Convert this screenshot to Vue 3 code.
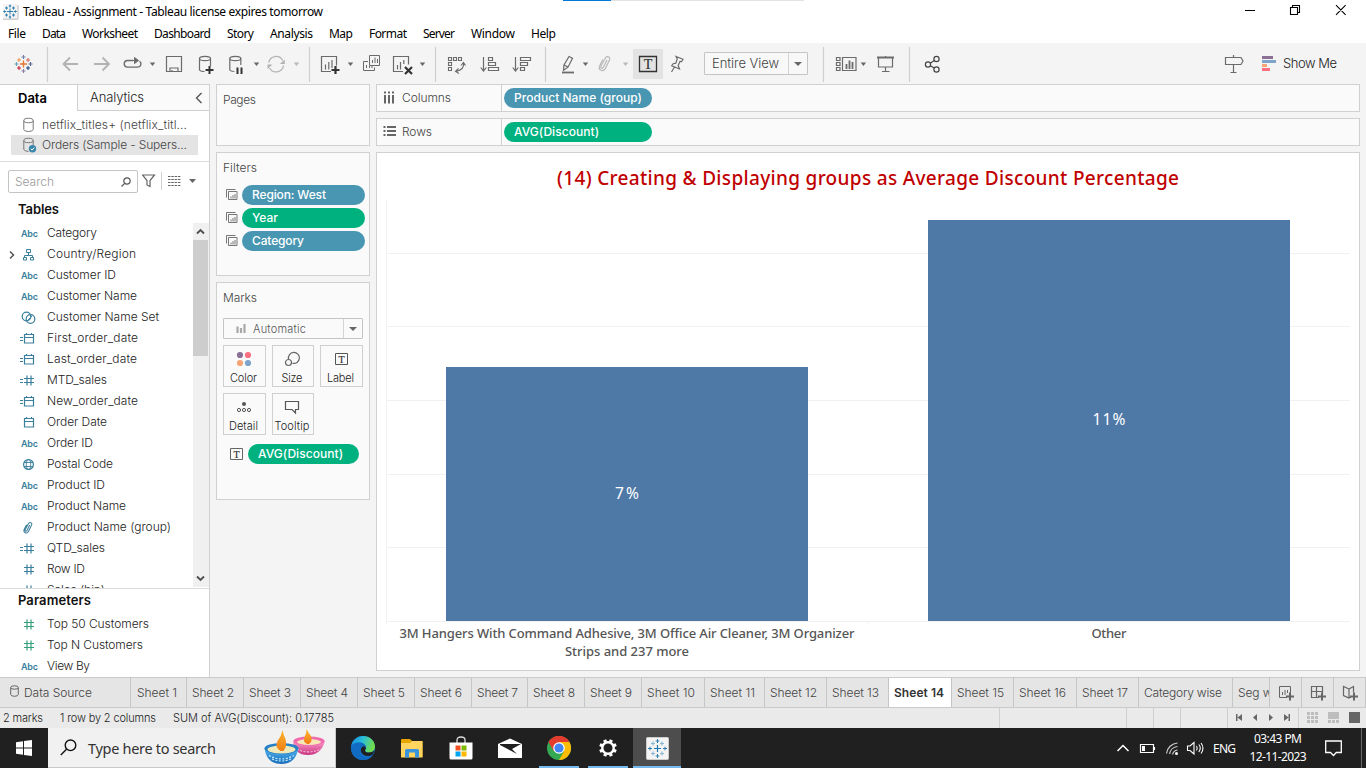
<script setup>
// Tracks text out (or in) so that a label takes a given width in pixels.
const vFit = {
  mounted(el, { value }) {
    if (!value) return
    const n = el.textContent.trim().length
    const w = el.getBoundingClientRect().width
    const gap = (value - w) / Math.max(1, n - 1)
    el.style.letterSpacing = gap.toFixed(3) + 'px'
    el.style.marginRight = (-gap).toFixed(3) + 'px'
  },
}

const menus = [
  ['File', 18], ['Data', 24], ['Worksheet', 56], ['Dashboard', 57], ['Story', 27], ['Analysis', 43],
  ['Map', 24], ['Format', 38], ['Server', 32], ['Window', 44], ['Help', 25],
]
const fields = [
  ['abc', 'Category', 50], ['geo', 'Country/Region', 89], ['abc', 'Customer ID', 69],
  ['abc', 'Customer Name', 90], ['set', 'Customer Name Set', 112], ['cdate', 'First_order_date', 91],
  ['cdate', 'Last_order_date', 90], ['cnum', 'MTD_sales', 60], ['cdate', 'New_order_date', 91],
  ['date', 'Order Date', 60], ['abc', 'Order ID', 46], ['globe', 'Postal Code', 66],
  ['abc', 'Product ID', 58], ['abc', 'Product Name', 79], ['clip', 'Product Name (group)', 124],
  ['cnum', 'QTD_sales', 58], ['num', 'Row ID', 38], ['cnum', 'Sales (bin)', 58],
]
const params = [['num', 'Top 50 Customers', 102], ['num', 'Top N Customers', 96], ['abc', 'View By', 43]]
const filters = [['Region: West', 74, 'blue'], ['Year', 26, 'green'], ['Category', 52, 'blue']]
const sheets = [
  ['Sheet 1', 56, 40], ['Sheet 2', 57, 42], ['Sheet 3', 57, 42], ['Sheet 4', 57, 42], ['Sheet 5', 57, 42],
  ['Sheet 6', 57, 42], ['Sheet 7', 56, 41], ['Sheet 8', 57, 42], ['Sheet 9', 57, 42], ['Sheet 10', 63, 48],
  ['Sheet 11', 60, 45], ['Sheet 12', 62, 47], ['Sheet 13', 62, 47], ['Sheet 14', 63, 50], ['Sheet 15', 62, 47],
  ['Sheet 16', 63, 47], ['Sheet 17', 62, 46], ['Category wise', 94, 78], ['Seg wise', 37, 50],
]
const bars = [{ h: 254, label: '7%', w: 24 }, { h: 401, label: '11%', w: 33 }]
const gridYs = [53, 126, 200, 274, 347]
const pluses = [
  [0, -7, '#6f7fa8'], [0, 7, '#8a7ba5'], [-7, 0, '#6b9fb5'], [7, 0, '#5b6591'],
  [-4.5, -4, '#eb9a4c'], [4.5, -4, '#d06a5a'], [-4.5, 4, '#c72035'], [4.5, 4, '#1f457e'],
]
</script>

<template>
  <div class="app">
    <header class="titlebar">
      <svg class="appicon" viewBox="0 0 16 16" width="16" height="16">
        <rect width="14.5" height="15" fill="#f3f3f3" /><path d="M0 15.2h15V1" stroke="#bbb" fill="none" />
        <path d="M7 4.5v6M4 7.5h6M7 .5v3M5.8 2h2.4M7 11.5v3M5.8 13h2.4M.2 7.5h3M1.5 6.3v2.4M10.8 7.5h3M12.4 6.3v2.4M2 4h3M3.5 2.6v3M9 4h3M10.5 2.6v3M2 11h3M3.5 9.6v3M9 11h3M10.5 9.6v3" stroke="#2f7fb0" fill="none" />
      </svg>
      <span v-fit="300">Tableau - Assignment - Tableau license expires tomorrow</span>
      <i class="progress"></i>
      <svg class="wincontrols" viewBox="1236 0 130 24" width="130" height="24" fill="none" stroke="#000">
        <path d="M1245 10.5h10M1290.5 7.500h7v7h-7zM1292.500 7.500v-2h7v7h-2M1336 5.200l9.600 9.600M1345.600 5.200l-9.600 9.600" stroke-width="1.100" />
      </svg>
    </header>

    <nav class="menubar"><div v-for="m in menus" :key="m[0]" class="menu"><span v-fit="m[1]">{{ m[0] }}</span></div></nav>

    <div class="toolbar">
      <svg viewBox="0 43 704 41" width="704" height="41" fill="none" stroke="#6b6b6b" stroke-width="1.200">
        <path d="M47.500 47v35M309.500 47v35M435.500 47v35M545.500 47v35" stroke="#cfcfcf" />
        <path d="M23.500 60.500v7M20 64h7" stroke="#e8762c" stroke-width="1.300" />
        <path v-for="(p, i) in pluses" :key="i" :d="`M${23.5 + p[0] - 2} ${64 + p[1]}h4m-2 -2v4`" :stroke="p[2]" stroke-width="1.100" />
        <g stroke="#b3b3b3" stroke-width="1.800">
          <path d="M78 64H64M70 57.500L63.500 64l6.500 6.500M94 64h14.500M102.500 57.500L109 64l-6.500 6.500" />
          <path d="M268.700 62.500a7.500 7.500 0 0 1 14-2M283.500 65.500a7.500 7.500 0 0 1 -14 2.500" stroke-width="1.300" />
          <path d="M284.800 59.500v4.500h-5zM267.500 69v-4.500h5z" fill="#b3b3b3" stroke="none" />
        </g>
        <path d="M133 60.500h-6a3.400 3.400 0 0 0 0 6.700h10.500a3.300 3.300 0 0 0 2-6" stroke-width="1.300" />
        <path d="M132 60.500h5M134.500 57.500l4 3-4 3z" fill="#6b6b6b" stroke-width="1" />
        <path d="M166.500 56.500h15v15h-15zM170 71v-3h8v3M172 70v1.500" />
        <path d="M210.500 66v-7.500M199.500 58.500v11.500q1 1.500 5 1.500M229.800 58.500v11.500q1 1.500 4.500 1.500M240.800 65v-6.500" />
        <ellipse cx="205" cy="58.500" rx="5.500" ry="2.200" /><ellipse cx="235.300" cy="58.500" rx="5.500" ry="2.200" />
        <path d="M209.500 66v8M205.500 70h8" stroke="#333" stroke-width="2" />
        <path d="M237.500 67.500v6.500M241.500 67.500v6.500" stroke="#333" stroke-width="2" />
        <path d="M331 71.500h-9.500v-15h15v9M325.500 64.500v5M328.800 62v7.500M332 60v8" />
        <path d="M335.500 66v8M331.500 70h8" stroke="#333" stroke-width="2.200" />
        <path d="M369.500 55.500h10v10h-10zM372.500 63v-3M375 63v-5.500M377.500 63v-4M368 61.500h-4.500v9h11v-3M366.500 68v-3M369.500 68v-2M372 68v-2" stroke-width="1" />
        <path d="M403 71.500h-9.500v-15h15v8M397.500 65v4.500M400.500 62v7.500M403.800 60v4" />
        <path d="M405 67l7 7M412 67l-7 7" stroke="#333" stroke-width="2.200" />
        <path d="M448.500 57.500h3v3h-3zM453.500 57.500h3v3h-3zM458.500 57.500h3v3h-3zM448.500 62.500h3v3h-3zM448.500 67.500h3v3h-3zM463.500 63.500q1 6-7.500 8M461 65.500l2.500-3 2 3M458.500 68.500l-3 3 3.500 2" stroke-width="1.100" />
        <path d="M483.500 57v13M480.700 67.500l2.800 3.500 2.800-3.500M488.500 57.500h4v3h-4zM488.500 62.500h7v3h-7zM488.500 67.500h10v3h-10z" />
        <path d="M515.500 57v13M512.700 67.500l2.800 3.500 2.800-3.500M520.500 57.500h10v3h-10zM520.500 62.500h7v3h-7zM520.500 67.500h4v3h-4z" />
        <path d="M562 72.500h12" stroke-width="1.800" /><path d="M569 56.500l3.500 1.700-4.500 9-4.500 3 .5-5.200zM564 65l4 2" />
        <g transform="translate(598 56)" stroke="#b8b8b8"><path d="M9 4L5.500 11c-1.300 2.500-3.600 1.200-2.400-1.200L7 2.700C8.600-.7 13 .8 11.400 4.200L7.300 12.600C5 16.500-.3 14 1.700 9.700L4.800 3.600" /></g>
        <path d="M633 49h30v30h-30z" fill="#e3e3e3" stroke="none" /><path d="M639.500 56.500h17v15h-17z" stroke="#333" stroke-width="1.300" />
        <path d="M676 56.500l7 2.800-1.500 2.200-1.500-.2-1.800 4.200 1.300 3.500-7.800-3.300 1.500-2 2.600-.5 1.400-4.200zM674.500 67l-3 5" />
        <g fill="#666" stroke="none">
          <path v-for="x in [152.500, 256.500, 350.500, 422.500, 585.500]" :key="x" :d="`M${x - 2.7} 62.500h5.400l-2.700 3.500z`" />
          <path v-for="x in [296.500, 625.500]" :key="x" :d="`M${x - 2.7} 62.500h5.400l-2.700 3.500z`" fill="#b8b8b8" />
        </g>
        <text x="648" y="68.500" class="serif-t" font-size="14">T</text>
      </svg>
      <div class="view-select"><span v-fit="67">Entire View</span><i class="caret-cell"><b></b></i></div>
      <svg class="tools-right" viewBox="808 43 142 41" width="142" height="41" fill="none" stroke="#6b6b6b" stroke-width="1.200">
        <path d="M823.500 47v35M909.500 47v35" stroke="#cfcfcf" />
        <path d="M836.500 57.500h3.500v3h-3.500zM836.500 62.500h3.500v3h-3.500zM836.500 67.500h3.500v3h-3.500zM842.500 57.500h13.500v13h-13.500z" />
        <path d="M846.500 64v5M849.500 60.500v8.500M852.500 62v7" stroke-width="1.800" />
        <path d="M860.700 62.500h5.400l-2.700 3.500z" fill="#666" stroke="none" />
        <path d="M877 57.500h17" stroke-width="2" /><path d="M878.500 58v9h14v-9M885.500 56v1M885.500 67v4.500M882 71.500h7.500" />
        <g stroke="#444"><circle cx="928" cy="64.500" r="2.600" /><circle cx="936.500" cy="59" r="2.600" /><circle cx="936.500" cy="69.500" r="2.600" /><path d="M930.300 63.200l4-2.600M930.300 65.800l4 2.300" /></g>
      </svg>
      <div class="showme">
        <svg viewBox="1224 54 56 20" width="56" height="20" fill="none">
          <path d="M1226.500 57.500h15.500l2 3.500-2 3.500h-15.500zM1234.500 55v2M1234.500 64.500v8M1231.500 72.500h6" stroke="#6b6b6b" stroke-width="1.200" />
          <path d="M1263 57.500h11" stroke="#8a7095" stroke-width="3" /><path d="M1263 61.500h14" stroke="#7fa4cc" stroke-width="3" />
          <path d="M1263 65.500h5" stroke="#f7a576" stroke-width="3" /><path d="M1263 69.500h8" stroke="#fb6f80" stroke-width="3" />
        </svg>
        <span v-fit="54">Show Me</span>
      </div>
    </div>

    <main class="workspace">
      <aside class="sidebar">
        <div class="sidetabs">
          <div class="st active"><span v-fit="29">Data</span></div>
          <div class="st other"><span v-fit="54">Analytics</span>
            <svg viewBox="0 0 8 12" width="8" height="12"><path d="M6.500 1L1.500 6l5 5" fill="none" stroke="#555" stroke-width="1.400" /></svg>
          </div>
        </div>
        <div class="sources">
          <div class="source">
            <svg viewBox="0 0 14 16" width="14" height="16" fill="none" stroke="#777"><ellipse cx="5.500" cy="3.500" rx="4.700" ry="2.200" /><path d="M.8 3.500v9q.5 2 4.700 2t4.700-2v-9" /></svg>
            <span v-fit="145">netflix_titles+ (netflix_titl...</span>
          </div>
          <div class="source selected">
            <svg viewBox="0 0 14 16" width="14" height="16" fill="none" stroke="#777"><ellipse cx="5.500" cy="3.500" rx="4.700" ry="2.200" /><path d="M.8 3.500v9q.5 1.500 4.700 2M10.200 8v-4.500" /><circle cx="9.500" cy="11.800" r="3.700" fill="#3a86ab" stroke="none" /><path d="M7.800 11.800l1.300 1.300 2.200-2.500" stroke="#fff" /></svg>
            <span v-fit="145">Orders (Sample - Supers...</span>
          </div>
        </div>
        <div class="searchrow">
          <div class="search"><span v-fit="39">Search</span>
            <svg viewBox="0 0 10 10" width="10" height="10" fill="none" stroke="#555" stroke-width="1.200"><circle cx="6" cy="4" r="3.200" /><path d="M3.700 6.300L.5 9.500" /></svg>
          </div>
          <svg viewBox="142 170 56 23" width="56" height="23" fill="none" stroke="#666">
            <path d="M142.500 175h12l-4.500 5.500v6l-3-1.500v-4.500z" stroke-width="1.200" /><path d="M161.500 172v18" stroke="#d0d0d0" />
            <path d="M168 176.500h12.500M168 179.500h12.500M168 182.500h12.500M168 185.500h12.500" stroke-width="1" stroke-dasharray="2.500 .8" />
            <path d="M189 179h7l-3.500 4z" fill="#666" stroke="none" />
          </svg>
        </div>
        <h3 class="heading"><span v-fit="41">Tables</span></h3>
        <div class="fieldbox">
          <ul class="fields">
            <li v-for="f in fields" :key="f[1]">
              <svg viewBox="0 0 39 21" width="39" height="21" fill="none" stroke="#3a7f9c" stroke-width="1.200">
                <text v-if="f[0] === 'abc'" x="21" y="14" class="abc">Abc</text>
                <template v-if="f[0] === 'geo'"><path d="M10 7.500l3.500 3.500-3.500 3.500" stroke="#555" stroke-width="1.500" /><path d="M26.500 5.500h4v3h-4zM28.500 8.500v3M24.500 14v-2.500h8v2.500M23.500 13.500h3v2.500h-3zM30.500 13.500h3v2.500h-3z" stroke-width="1" /></template>
                <template v-if="f[0] === 'set'"><circle cx="26.500" cy="9.500" r="4.300" /><circle cx="30.500" cy="12" r="4.300" /><path d="M27 14l5-5" stroke-width="1" /></template>
                <path v-if="f[0] === 'cdate' || f[0] === 'date'" d="M24.500 6.500h9v8.500h-9zM24.500 9.500h9M26.500 5v2M31.500 5v2" />
                <path v-if="f[0] === 'cdate' || f[0] === 'cnum'" d="M20 9.500h3M20 12.500h3" />
                <path v-if="f[0] === 'cnum' || f[0] === 'num'" d="M27 5.500v10M31 5.500v10M24 8.500h10M24 12.500h10" />
                <g v-if="f[0] === 'globe'"><circle cx="28.500" cy="10.500" r="4.900" /><ellipse cx="28.500" cy="10.500" rx="2.200" ry="4.900" stroke-width=".9" /><path d="M24 8.500h9M24 12.500h9" stroke-width=".9" /></g>
                <g v-if="f[0] === 'clip'" transform="translate(23 5) scale(.75)" stroke-width="1.400"><path d="M9 4L5.500 11c-1.300 2.500-3.600 1.200-2.400-1.200L7 2.700C8.600-.7 13 .8 11.400 4.200L7.300 12.600C5 16.500-.3 14 1.700 9.700L4.800 3.600" /></g>
              </svg>
              <span v-fit="f[2]">{{ f[1] }}</span>
            </li>
          </ul>
          <div class="scroll">
            <svg viewBox="0 0 15 17" width="15" height="17"><path d="M4 10.500l3.500-3.500 3.500 3.500" fill="none" stroke="#505050" stroke-width="1.900" /></svg>
            <i class="thumb"></i>
            <svg viewBox="0 0 15 17" width="15" height="17"><path d="M4 6.500l3.500 3.500 3.500-3.500" fill="none" stroke="#505050" stroke-width="1.900" /></svg>
          </div>
        </div>
        <div class="params">
          <h3 class="heading"><span v-fit="73">Parameters</span></h3>
          <ul class="fields">
            <li v-for="p in params" :key="p[1]">
              <svg viewBox="0 0 39 21" width="39" height="21" fill="none" stroke="#35a07c" stroke-width="1.200">
                <text v-if="p[0] === 'abc'" x="21" y="14" class="abc">Abc</text>
                <path v-else d="M27 5.500v10M31 5.500v10M24 8.500h10M24 12.500h10" />
              </svg>
              <span v-fit="p[2]">{{ p[1] }}</span>
            </li>
          </ul>
        </div>
      </aside>

      <section class="cards">
        <div class="card pages"><h4 v-fit="33">Pages</h4></div>
        <div class="card filters">
          <h4 v-fit="34">Filters</h4>
          <div v-for="f in filters" :key="f[0]" class="filter">
            <svg viewBox="0 0 12 12" width="12" height="12" fill="none" stroke="#777"><path d="M2.500 2.500h8.500v8h-8.500zM.5 8.500v-8h9M5 9.500V7.500M7 9.500V6M9 9.500V5" /></svg>
            <div class="pill" :class="f[2]"><span v-fit="f[1]">{{ f[0] }}</span></div>
          </div>
        </div>
        <div class="card marks">
          <h4 v-fit="34">Marks</h4>
          <div class="marktype">
            <svg viewBox="0 0 10 10" width="10" height="10" fill="none" stroke="#a9a9a9"><path d="M1.500 2.500v6.500M5 4v5M8.500 0v9" stroke-width="2.200" /></svg>
            <span v-fit="53">Automatic</span><i class="caret-cell"><b></b></i>
          </div>
          <div class="markgrid">
            <div class="mark"><svg viewBox="0 0 20 16" width="20" height="16"><circle cx="6" cy="4" r="3.100" fill="#8a7095" /><circle cx="14" cy="4" r="3.100" fill="#fb6f80" /><circle cx="6" cy="12" r="3.100" fill="#f7a576" /><circle cx="14" cy="12" r="3.100" fill="#7fa4cc" /></svg><span v-fit="27">Color</span></div>
            <div class="mark"><svg viewBox="0 0 20 16" width="20" height="16" fill="none" stroke="#666" stroke-width="1.200"><path d="M6.500 8a5.500 5.500 0 1 1 4 4.200" /><circle cx="6.500" cy="11.500" r="3" /></svg><span v-fit="21">Size</span></div>
            <div class="mark"><svg viewBox="0 0 20 16" width="20" height="16" fill="none" stroke="#555" stroke-width="1"><path d="M4.500 2.500h12v11h-12z" /><text x="10.500" y="11.500" class="serif-t" font-size="10">T</text></svg><span v-fit="27">Label</span></div>
            <div class="mark"><svg viewBox="0 0 20 16" width="20" height="16" fill="none" stroke="#555"><circle cx="10" cy="5" r="2" fill="#555" stroke="none" /><circle cx="5" cy="11" r="1.600" /><circle cx="10" cy="11" r="1.600" /><circle cx="15" cy="11" r="1.600" /></svg><span v-fit="29">Detail</span></div>
            <div class="mark"><svg viewBox="0 0 20 16" width="20" height="16" fill="none" stroke="#555" stroke-width="1.200"><path d="M3.500 2.500h13v8h-3v3.500l-3.500-3.500h-6.500z" /></svg><span v-fit="35">Tooltip</span></div>
          </div>
          <div class="markpill">
            <svg viewBox="0 0 14 13" width="14" height="13" fill="none" stroke="#666"><path d="M.5.500h12v11h-12z" /><text x="6.500" y="9.500" class="serif-t" font-size="10">T</text></svg>
            <div class="pill green"><span v-fit="85">AVG(Discount)</span></div>
          </div>
        </div>
      </section>

      <section class="canvas">
        <div class="shelf">
          <div class="shelfname"><svg viewBox="0 0 14 14" width="14" height="14" fill="none" stroke="#666" stroke-width="2"><path d="M2 4v8.500M6 4v8.500M10 4v8.500M2 .5v2M6 .5v2M10 .5v2" /></svg><span v-fit="49">Columns</span></div>
          <div class="pill blue"><span v-fit="128">Product Name (group)</span></div>
        </div>
        <div class="shelf">
          <div class="shelfname"><svg viewBox="0 0 14 14" width="14" height="14" fill="none" stroke="#666" stroke-width="2"><path d="M4 2h9M4 6h9M4 10h9M.5 2h2M.5 6h2M.5 10h2" /></svg><span v-fit="30">Rows</span></div>
          <div class="pill green"><span v-fit="85">AVG(Discount)</span></div>
        </div>
        <div class="viz">
          <h1><span v-fit="622">(14) Creating &amp; Displaying groups as Average Discount Percentage</span></h1>
          <div class="plot">
            <svg class="grid" viewBox="0 0 964 424" width="964" height="424" fill="none" stroke="#f1f1f1">
              <path v-for="y in gridYs" :key="y" :d="`M0 ${y + .5}h964`" />
              <path d="M.5 0v424M0 421.500h964M482.500 421v3" />
            </svg>
            <div v-for="b in bars" :key="b.label" class="slot"><div class="bar" :style="{ height: b.h + 'px' }"><span v-fit="b.w">{{ b.label }}</span></div></div>
          </div>
          <div class="axis">
            <div><span v-fit="455">3M Hangers With Command Adhesive, 3M Office Air Cleaner, 3M Organizer</span><br /><span v-fit="124">Strips and 237 more</span></div>
            <div><span v-fit="35">Other</span></div>
          </div>
        </div>
      </section>
    </main>

    <div class="tabs">
      <div class="tab source-tab">
        <svg viewBox="0 0 9 12" width="9" height="12" fill="none" stroke="#666"><ellipse cx="4.500" cy="2.500" rx="3.800" ry="1.700" /><path d="M.7 2.500v7q.5 1.800 3.800 1.800t3.800-1.800v-7" /></svg>
        <span v-fit="68">Data Source</span>
      </div>
      <div v-for="s in sheets" :key="s[0]" class="tab" :class="{ first: s[0] === 'Sheet 1', current: s[0] === 'Sheet 14' }" :style="{ width: s[1] + 'px' }"><span v-fit="s[2]">{{ s[0] }}</span></div>
      <div class="newtab"><svg viewBox="0 0 16 16" width="16" height="16" fill="none" stroke="#666"><path d="M9 12.500H1.500v-11h11v7M4.500 10V7M7 10V5M9.500 8V5" /><path d="M12 7.500v8M8 11.500h8" stroke-width="2" /></svg></div>
      <div class="newtab"><svg viewBox="0 0 16 16" width="16" height="16" fill="none" stroke="#666"><path d="M9 12.500H1.500v-11h11v7M1.500 6.500h11M6.500 1.500v11" stroke-width="1.200" /><path d="M12 7.500v8M8 11.500h8" stroke-width="2" /></svg></div>
      <div class="newtab"><svg viewBox="0 0 16 16" width="16" height="16" fill="none" stroke="#666"><path d="M7 4L1.500 1.500v9L7 13l2-1M7 4v9M7 4l4.500-2.500v6" stroke-width="1.200" /><path d="M12 7.500v8M8 11.500h8" stroke-width="2" /></svg></div>
    </div>

    <div class="status">
      <span v-fit="40">2 marks</span><span v-fit="96">1 row by 2 columns</span><span v-fit="161">SUM of AVG(Discount): 0.17785</span>
      <svg viewBox="996 708 370 20" width="370" height="20" fill="#666">
        <path d="M999.500 708v20M1126.500 708v20M1153.500 708v20M1180.500 708v20M1227.500 708v20M1298.500 708v20" stroke="#cfcfcf" />
        <path d="M1236 714h1.500v7h-1.500zM1242 714v7l-4.500-3.500zM1257 714v7l-4-3.500zM1269 714v7l4-3.500zM1284 714v7l4.500-3.500zM1288.500 714h1.500v7h-1.500z" />
        <g fill="#bdbdbd"><path v-for="i in 9" :key="i" :d="`M${1307 + ((i - 1) % 3) * 4} ${712 + Math.floor((i - 1) / 3) * 4}h3v3h-3z`" /><path d="M1328 712h11v7h-11zM1328 720h3v3h-3zM1332 720h3v3h-3zM1336 720h3v3h-3z" /></g>
        <path d="M1349 712h11v11h-11z" />
      </svg>
    </div>

    <footer class="taskbar">
      <div class="start"><svg viewBox="0 0 16 16" width="16" height="16" fill="#fff"><path d="M0 2.300l7-1v6.200H0zM8 1.100L16 0v7.500H8zM0 8.500h7v6.200l-7-1zM8 8.500h8V16l-8-1.100z" /></svg></div>
      <div class="tasksearch">
        <svg viewBox="0 0 17 17" width="17" height="17" fill="none" stroke="#111" stroke-width="1.400"><circle cx="10.500" cy="6.300" r="5.300" /><path d="M6.500 10.300L.8 16" /></svg>
        <span v-fit="128">Type here to search</span>
        <svg class="diya" viewBox="0 0 62 38" width="62" height="38">
          <defs>
            <linearGradient id="dp" x2="0" y2="1"><stop stop-color="#ff9bcb" /><stop offset="1" stop-color="#c8347f" /></linearGradient>
            <linearGradient id="db" x2="0" y2="1"><stop stop-color="#55b9f4" /><stop offset="1" stop-color="#176bb8" /></linearGradient>
            <linearGradient id="df" x2="0" y2="1"><stop stop-color="#ffb62e" /><stop offset="1" stop-color="#ef7d16" /></linearGradient>
          </defs>
          <path d="M29 12q1 14 15 14 13 0 17-14z" fill="url(#dp)" /><ellipse cx="45" cy="12" rx="15.500" ry="4.500" fill="#f06aad" /><ellipse cx="45" cy="13" rx="12" ry="3" fill="#f7e6b8" />
          <path d="M42.500 0q2 4 4.500 7 2 5-2 8h-2q-5-3-2-8 1.500-3 1.500-7z" fill="url(#df)" />
          <path d="M33 20q11 6 24 0" fill="none" stroke="#ffd1e8" stroke-dasharray="2 1.500" />
          <path d="M.5 19q2 16 17 16 14 0 17-16z" fill="url(#db)" /><ellipse cx="17.500" cy="19.500" rx="17" ry="5.500" fill="#2580c6" /><ellipse cx="17.500" cy="20.500" rx="14" ry="4" fill="#efe9b9" />
          <path d="M18.500 1q1 5 3 9 2 7-2 12h-3q-6-4-3-10 4-5 5-11z" fill="url(#df)" /><path d="M5 26.500q12 7 25 0M8 30q9 4 19 0" fill="none" stroke="#bfe9ff" stroke-width="1.200" stroke-dasharray="2 1.500" />
        </svg>
      </div>
      <div class="task">
        <svg viewBox="0 0 24 24" width="24" height="24">
          <defs><linearGradient id="ea" x1="0" y1="0" x2="1" y2=".3"><stop stop-color="#1783dd" /><stop offset=".5" stop-color="#28bfd8" /><stop offset="1" stop-color="#6fdc50" /></linearGradient></defs>
          <circle cx="12" cy="12" r="12" fill="#1274cf" /><path d="M.2 10C1.500 3 7 0 12 0c7 0 12 5 12 10.500 0 4-3 6-6 6-2.500 0-4-1-4-1.800 0-1 1-1 1-3C15 9 12 6.500 8.500 6.500 4 6.500 1.200 8 .2 10z" fill="url(#ea)" />
          <path d="M8.500 6.500c3.500 0 6.500 2.500 6.500 5.200-1-2-6-2-6 2.500 0 4.500 4.500 7.500 9 6.300 1.500-.4 3-1 3.800-1.600C19.500 22.500 16 24 12 24 5 24 0 18.500 0 12c0-3 4-5.500 8.500-5.500z" fill="#116bc3" /><path d="M14.900 12.200c-.2 1-.9 1.500-.9 2.500 0 .8 1.500 1.800 4 1.800 2.300 0 4-1 5-2.300-.3 2.300-1.300 4.200-1.300 4.200s-2 1.700-5 1.700C10 20 7.600 12.500 12 10.500c1.700-.5 3 .5 2.900 1.700z" fill="#202020" />
        </svg>
      </div>
      <div class="task"><svg viewBox="0 0 22 19" width="22" height="19"><path d="M0 1q0-1 1-1h8l2 2h10.500v16H0z" fill="#e6a800" /><path d="M0 4h9l2-2h10.500v16.500H0z" fill="#ffd45f" /><path d="M4 18.500v-7q0-1.500 1.500-1.500h11q1.500 0 1.500 1.500v7h-4v-5H8v5z" fill="#3a94dd" /></svg></div>
      <div class="task"><svg viewBox="0 0 24 24" width="24" height="24"><path d="M8 7V4q0-3 4-3t4 3v3" fill="none" stroke="#ddd" stroke-width="1.300" /><path d="M.5 6.500h23V22q0 1.500-1.500 1.500H2Q.5 23.500.5 22z" fill="#fff" /><path d="M6.500 9.500h5v5h-5z" fill="#f25022" /><path d="M12.500 9.500h5v5h-5z" fill="#7fba00" /><path d="M6.500 15.500h5v5h-5z" fill="#00a4ef" /><path d="M12.500 15.500h5v5h-5z" fill="#ffb900" /></svg></div>
      <div class="task"><svg viewBox="0 0 24 20" width="24" height="20"><path d="M12 .5L24 6v14H0V6z" fill="#fff" /><path d="M2 6h21l-9 5 5 5-17-9z" fill="#202020" /></svg></div>
      <div class="task running">
        <svg viewBox="0 0 24 24" width="24" height="24"><circle cx="12" cy="12" r="12" fill="#34a853" /><path d="M1.600 6A12 12 0 0 1 22.400 6L18 12 6.800 15z" fill="#ea4335" /><path d="M22.400 6A12 12 0 0 1 12 24l5.200-9L12 6z" fill="#fbbc05" /><path d="M1.600 6A12 12 0 0 1 22.400 6H12l-5 9z" fill="#e33b2e" /><circle cx="12" cy="12" r="5.800" fill="#fff" /><circle cx="12" cy="12" r="4.600" fill="#4285f4" /></svg>
      </div>
      <div class="task running">
        <svg viewBox="0 0 20 20" width="20" height="20" fill="none" stroke="#fff"><circle cx="10" cy="10" r="5.700" stroke-width="2.400" /><path v-for="a in 8" :key="a" d="M10 1.200v2.800" stroke-width="3.200" :transform="`rotate(${a * 45 - 22.5} 10 10)`" /></svg>
      </div>
      <div class="task running focus">
        <svg viewBox="0 0 23 23" width="23" height="23"><rect width="22" height="22" x=".5" y=".5" rx="1" fill="#f4f4f4" stroke="#ccc" />
          <path d="M11.500 8v7M8 11.500h7" stroke="#1f77b4" stroke-width="1.200" /><path d="M11.500 2v4M9.700 4h3.600M11.500 17v4M9.700 19h3.600M2 11.500h4M4 9.700v3.600M17 11.500h4M19 9.700v3.600" stroke="#2f7fb0" />
          <path d="M5 6.500h4M7 4.500v4M14 6.500h4M16 4.500v4M5 16.500h4M7 14.500v4M14 16.500h4M16 14.500v4" stroke="#8ab8d4" stroke-width="1.200" /></svg>
      </div>
      <div class="tray">
        <svg viewBox="1112 734 96 28" width="96" height="28" fill="none" stroke="#fff" stroke-width="1.200">
          <path d="M1117.500 751l5.500-5.500 5.500 5.500" stroke-width="1.500" /><path d="M1140.500 744.500h13v8h-13zM1154.500 747v3" /><path d="M1142 746h3v5h-3z" fill="#fff" stroke="none" />
          <path d="M1166.500 753.500a12 12 0 0 1 11-10.500M1169.500 754a9 9 0 0 1 8-7.500M1172.500 754.500a6 6 0 0 1 5-4.500" stroke="#ccc" /><circle cx="1176.500" cy="753.500" r="1.500" fill="#fff" stroke="none" />
          <path d="M1187.500 746v4.500h2.500l4 3.500v-11.500l-4 3.500zM1196.500 746q1.500 2 0 4.500M1198.800 744.500q3 3.500 0 7.500M1201 743q4 5 0 10.500" stroke-width="1.100" />
        </svg>
        <span class="lang" v-fit="23">ENG</span>
        <div class="clock"><span v-fit="48">03:43 PM</span><span v-fit="57">12-11-2023</span></div>
        <svg class="notif" viewBox="0 0 17 17" width="17" height="17" fill="none" stroke="#fff" stroke-width="1.300"><path d="M.7 1h15.600v11.500h-5L8.500 15.500l-3-3H.7z" /></svg>
        <i class="peek"></i>
      </div>
    </footer>
  </div>
</template>

<style>
body { margin: 0; overflow: hidden; background: #f4f4f4; }
</style>

<style scoped>
.app { width: 1366px; height: 768px; display: flex; flex-direction: column; font-family: Inter, "Open Sans", sans-serif; font-size: 12px; font-weight: 300; color: #222; background: #f4f4f4; overflow: hidden; }
.app * { box-sizing: border-box; }
svg { display: block; flex: none; }
span { white-space: nowrap; display: inline-block; }
h1, h3, h4, ul { margin: 0; padding: 0; list-style: none; font-weight: inherit; }
.serif-t { font-family: "Liberation Serif", serif; font-weight: 400; fill: #333; stroke: #333; stroke-width: .2px; text-anchor: middle; }
.abc { font-family: Inter, sans-serif; font-size: 9px; font-weight: 600; fill: #3a7f9c; stroke: none; letter-spacing: -.2px; }

.titlebar { height: 24px; background: #fff; display: flex; align-items: center; position: relative; padding-left: 3px; gap: 4px; font-family: "Noto Sans", sans-serif; font-weight: 400; color: #000; }
.titlebar span { padding-bottom: 1px; }
.progress { position: absolute; left: 563px; top: 0; width: 241px; height: 1px; background: linear-gradient(90deg, #0078d7 48px, #e2e2e2 48px); }
.wincontrols { margin-left: auto; }
.menubar { height: 19px; background: #fff; display: flex; align-items: center; gap: 16px; padding-left: 8px; font-family: "Noto Sans", sans-serif; font-weight: 400; color: #000; }
.toolbar { height: 41px; flex: none; display: flex; align-items: center; background: #f4f4f4; }
.view-select { width: 104px; height: 23px; border: 1px solid #c4c4c4; border-radius: 1px; background: #f8f8f8; display: flex; align-items: center; padding-left: 7px; font-size: 13px; color: #444; }
.view-select span { padding-bottom: 1px; }
.caret-cell { width: 19px; height: 100%; margin-left: auto; border-left: 1px solid #d4d4d4; display: flex; align-items: center; justify-content: center; }
.caret-cell b { border: 4px solid transparent; border-top-color: #666; border-bottom: 0; }
.showme { margin-left: auto; padding-right: 29px; display: flex; align-items: center; gap: 4px; font-size: 13px; }
.showme span { padding-bottom: 1px; }

.workspace { height: 593px; flex: none; display: flex; }
.sidebar { width: 210px; background: #fff; border: solid #d0d0d0; border-width: 1px 1px 0 0; display: flex; flex-direction: column; overflow: hidden; }
.sidetabs { display: flex; height: 26px; flex: none; font-size: 13px; color: #222; }
.st { display: flex; align-items: center; }
.st span { padding-bottom: 1px; }
.st.active { width: 77px; padding-left: 18px; font-weight: 600; color: #000; }
.st.other { flex: 1; border: solid #d0d0d0; border-width: 0 0 1px 1px; background: #fafafa; padding: 0 6px 0 12px; justify-content: space-between; }
.sources { height: 51px; flex: none; border-bottom: 1px solid #dcdcdc; padding: 4px 11px 0; color: #444; }
.source { height: 20px; display: flex; align-items: center; gap: 5px; padding-left: 12px; }
.source span { padding-bottom: 2px; }
.source.selected { background: #e4e4e4; }
.searchrow { display: flex; gap: 4px; padding: 8px 0 0 8px; height: 31px; flex: none; }
.search { width: 130px; height: 23px; border: 1px solid #c4c4c4; border-radius: 2px; display: flex; align-items: center; justify-content: space-between; padding: 0 6px; color: #999; }
.heading { font-size: 13px; font-weight: 600; color: #111; padding-left: 18px; }
.searchrow + .heading { height: 30px; line-height: 32px; }
.fieldbox { height: 365px; flex: none; display: flex; justify-content: space-between; overflow: hidden; }
.fields li { height: 21px; display: flex; align-items: center; gap: 8px; }
.fields li span { padding-bottom: 2px; }
.scroll { width: 16px; height: 364px; background: #f0f0f0; display: flex; flex-direction: column; }
.thumb { width: 15px; height: 116px; background: #cdcdcd; margin-bottom: auto; }
.params { border-top: 1px solid #dcdcdc; flex: 1; }
.params .heading { height: 25px; line-height: 23px; }

.cards { width: 154px; margin-left: 6px; display: flex; flex-direction: column; gap: 6px; }
.card { border: 1px solid #d0d0d0; background: #fafafa; padding: 6px; }
.card h4 { height: 18px; line-height: 18px; color: #444; width: max-content; }
.pages { height: 62px; }
.filters { height: 124px; }
.marks { height: 218px; }
.filter { display: flex; align-items: center; gap: 4px; margin: 0 -2px 3px 3px; }
.filters h4 { margin-bottom: 8px; }
.filter .pill { flex: 1; }
.pill { height: 20px; border-radius: 10px; color: #fff; padding-left: 10px; display: flex; align-items: center; font-weight: 500; font-size: 12px; }
.pill span { padding-bottom: 2px; }
.blue { background: #4996b2; }
.green { background: #00b180; }
.marktype { margin-top: 11px; width: 140px; height: 21px; border: 1px solid #c4c4c4; border-radius: 1px; display: flex; align-items: center; padding-left: 12px; gap: 7px; font-size: 11px; color: #555; }
.markgrid { margin-top: 6px; display: grid; grid-template-columns: 43px 42px 43px; grid-auto-rows: 42px; gap: 6px; }
.mark { border: 1px solid #d0d0d0; display: flex; flex-direction: column; align-items: center; padding: 5px 2px 0 0; font-size: 11px; gap: 3px; }
.mark span { line-height: 16px; }
.markpill { margin: 9px 0 0 7px; display: flex; align-items: center; gap: 4px; }
.markpill .pill { width: 111px; }

.canvas { margin-left: 6px; width: 984px; display: flex; flex-direction: column; }
.shelf { height: 28px; margin-bottom: 6px; border: 1px solid #d0d0d0; background: #fafafa; display: flex; align-items: center; gap: 2px; flex: none; }
.shelfname { width: 125px; height: 100%; border-right: 1px solid #d0d0d0; display: flex; align-items: center; gap: 5px; padding-left: 6px; color: #444; }
.shelfname span { padding-bottom: 2px; }
.shelf .pill { width: 148px; }
.viz { height: 519px; border: 1px solid #d0d0d0; background: #fff; font-family: "Noto Sans", sans-serif; font-weight: 400; }
.viz h1 { height: 47px; line-height: 51px; text-align: center; font-size: 19px; font-weight: 500; color: #c00000; }
.plot { position: relative; width: 964px; height: 421px; margin-left: 9px; display: grid; grid-template-columns: 1fr 1fr; align-items: end; }
.grid { position: absolute; left: 0; top: 0; }
.slot { display: flex; justify-content: center; }
.bar { position: relative; width: 362px; background: #4e79a7; color: #fff; font-size: 15.500px; display: flex; align-items: center; justify-content: center; padding-bottom: 3px; }
.axis { width: 964px; margin-left: 9px; padding-top: 3px; display: grid; grid-template-columns: 1fr 1fr; text-align: center; line-height: 18px; font-size: 13px; font-weight: 500; color: #555; }

.tabs { height: 31px; flex: none; display: flex; border: solid #cacaca; border-width: 1px 0; background: #e5e5e5; font-size: 12px; color: #444; }
.tab { border-right: 1px solid #c6c6c6; padding-left: 5px; display: flex; align-items: center; overflow: hidden; flex: none; }
.tab.first { padding-left: 6px; }
.tab.source-tab { width: 131px; gap: 5px; padding-left: 10px; }
.source-tab svg { margin-bottom: 3px; }
.tab.current { background: #fff; font-weight: 600; color: #333; }
.newtab { width: 32px; border-right: 1px solid #c6c6c6; display: flex; align-items: center; justify-content: center; }
.status { height: 20px; flex: none; background: #eaeaea; display: flex; align-items: center; gap: 17px; padding-left: 3px; font-size: 11px; }
.status svg { margin-left: auto; }

.taskbar { height: 40px; background: #202020; display: flex; color: #fff; font-family: "Noto Sans", sans-serif; font-weight: 400; }
.start { width: 48px; display: flex; align-items: center; justify-content: center; }
.tasksearch { width: 288px; background: #f1f1f1; border: solid #c9c9c9; border-width: 0 1px 1px 0; display: flex; align-items: center; padding-left: 12px; color: #333; font-size: 14.500px; gap: 11px; }
.diya { margin-left: 37px; }
.task { width: 48px; margin-right: 1px; display: flex; align-items: center; justify-content: center; position: relative; }
.tasksearch + .task { margin-left: 3px; }
.running::after { content: ""; position: absolute; left: 4px; right: 4px; bottom: 0; height: 2px; background: #76b9ed; }
.focus { background: #4d4d4d; }
.focus::after { left: 0; right: 0; }
.tray { margin-left: auto; display: flex; align-items: center; }
.lang { margin-left: 5px; font-size: 12px; }
.clock { width: 84px; display: flex; flex-direction: column; align-items: center; line-height: 18px; font-size: 12px; }
.notif { margin-left: 5px; }
.peek { width: 1px; height: 40px; background: #666; margin: 0 4px 0 19px; }
</style>
